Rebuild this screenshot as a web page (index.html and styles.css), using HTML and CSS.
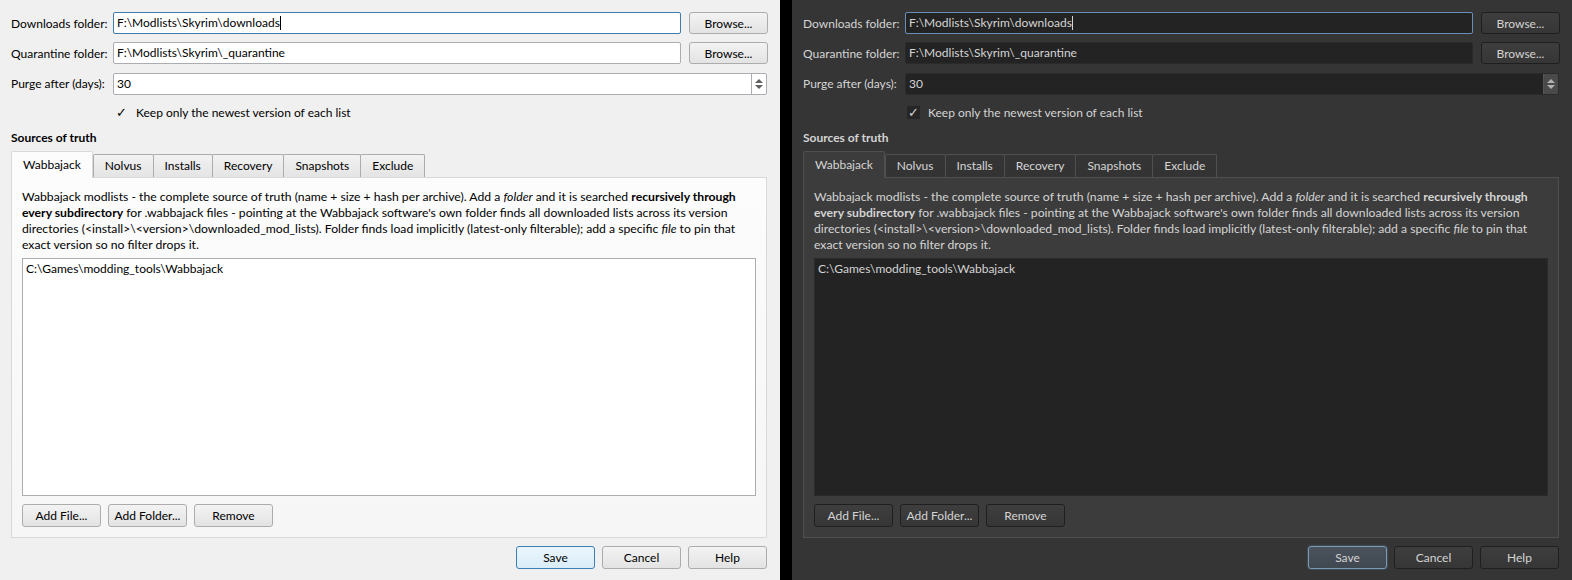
FILE: index.html
```html
<!DOCTYPE html>
<html lang="en">
<head>
  <meta charset="UTF-8">
  <title>Settings</title>
  <link rel="stylesheet" href="styles.css">
</head>
<body>

  <div class="dialog light">
    <div class="fields">
      <label>Downloads folder:</label>
      <div class="input focused">F:\Modlists\Skyrim\downloads<span class="caret"></span></div>
      <button>Browse...</button>

      <label>Quarantine folder:</label>
      <div class="input">F:\Modlists\Skyrim\_quarantine</div>
      <button>Browse...</button>

      <label>Purge after (days):</label>
      <div class="input spin">30<span class="arrows"><i class="up"></i><i class="down"></i></span></div>

      <div class="check"><span class="box">&#10003;</span>Keep only the newest version of each list</div>
    </div>

    <div class="section">Sources of truth</div>

    <div class="tabs">
      <div class="tab active">Wabbajack</div>
      <div class="tab">Nolvus</div>
      <div class="tab">Installs</div>
      <div class="tab">Recovery</div>
      <div class="tab">Snapshots</div>
      <div class="tab">Exclude</div>
    </div>
    <div class="pane">
      <p class="desc">Wabbajack modlists - the complete source of truth (name + size + hash per archive). Add a <i>folder</i> and it is searched <b>recursively through</b><br><b>every subdirectory</b> for .wabbajack files - pointing at the Wabbajack software's own folder finds all downloaded lists across its version<br>directories (&lt;install&gt;\&lt;version&gt;\downloaded_mod_lists). Folder finds load implicitly (latest-only filterable); add a specific <i>file</i> to pin that<br>exact version so no filter drops it.</p>
      <div class="list">
        <div class="item">C:\Games\modding_tools\Wabbajack</div>
      </div>
      <div class="row">
        <button>Add File...</button>
        <button>Add Folder...</button>
        <button>Remove</button>
      </div>
    </div>

    <div class="footer">
      <button class="default">Save</button>
      <button>Cancel</button>
      <button>Help</button>
    </div>
  </div>

  <div class="divider"></div>

  <div class="dialog dark">
    <div class="fields">
      <label>Downloads folder:</label>
      <div class="input focused">F:\Modlists\Skyrim\downloads<span class="caret"></span></div>
      <button>Browse...</button>

      <label>Quarantine folder:</label>
      <div class="input">F:\Modlists\Skyrim\_quarantine</div>
      <button>Browse...</button>

      <label>Purge after (days):</label>
      <div class="input spin">30<span class="arrows"><i class="up"></i><i class="down"></i></span></div>

      <div class="check"><span class="box">&#10003;</span>Keep only the newest version of each list</div>
    </div>

    <div class="section">Sources of truth</div>

    <div class="tabs">
      <div class="tab active">Wabbajack</div>
      <div class="tab">Nolvus</div>
      <div class="tab">Installs</div>
      <div class="tab">Recovery</div>
      <div class="tab">Snapshots</div>
      <div class="tab">Exclude</div>
    </div>
    <div class="pane">
      <p class="desc">Wabbajack modlists - the complete source of truth (name + size + hash per archive). Add a <i>folder</i> and it is searched <b>recursively through</b><br><b>every subdirectory</b> for .wabbajack files - pointing at the Wabbajack software's own folder finds all downloaded lists across its version<br>directories (&lt;install&gt;\&lt;version&gt;\downloaded_mod_lists). Folder finds load implicitly (latest-only filterable); add a specific <i>file</i> to pin that<br>exact version so no filter drops it.</p>
      <div class="list">
        <div class="item">C:\Games\modding_tools\Wabbajack</div>
      </div>
      <div class="row">
        <button>Add File...</button>
        <button>Add Folder...</button>
        <button>Remove</button>
      </div>
    </div>

    <div class="footer">
      <button class="default">Save</button>
      <button>Cancel</button>
      <button>Help</button>
    </div>
  </div>

</body>
</html>
```

FILE: styles.css
```css
body {
  margin: 0;
  display: flex;
  height: 580px;
  font-family: Lato, "Open Sans", sans-serif;
  font-size: 12px;
  background: #000;
}

/* colour themes */
.light {
  --bg: #f0f0f0;
  --text: #000;
  --field: #fff;
  --field-border: #abadb3;
  --focus: #3d7bad;
  --btn-top: #f3f3f3;
  --btn-bottom: #e3e3e3;
  --btn-border: #acacac;
  --tab-top: #f2f2f2;
  --tab-bottom: #e4e4e4;
  --pane: #fcfcfc;
  --pane-border: #d9d9d9;
  --tab-border: #acacac;
}
.dark {
  --bg: #353535;
  --text: #d4d4d4;
  --field: #232323;
  --field-border: #2a2a2a;
  --focus: #6a8fb8;
  --btn-top: #3e3e3e;
  --btn-bottom: #363636;
  --btn-border: #1f1f1f;
  --tab-top: #353535;
  --tab-bottom: #333;
  --pane: #3c3c3c;
  --pane-border: #4f4f4f;
  --tab-border: #505050;
}

.dialog {
  width: 780px;
  background: var(--bg);
  color: var(--text);
  padding: 12px 13px 0 11px;
  box-sizing: border-box;
}
.divider {
  width: 12px;
  background: #000;
}

.fields {
  display: grid;
  grid-template-columns: 94px 1fr 78px;
  column-gap: 8px;
  row-gap: 8px;
  align-items: center;
}
.fields label {
  white-space: nowrap;
}
.fields button {
  height: 22px;
}
.input {
  height: 22px;
  line-height: 20px;
  box-sizing: border-box;
  border: 1px solid var(--field-border);
  border-radius: 2px;
  background: var(--field);
  padding: 0 3px;
  position: relative;
}
.input.focused {
  border-color: var(--focus);
}
.caret {
  display: inline-block;
  width: 1px;
  height: 14px;
  background: var(--text);
  vertical-align: -3px;
}
.spin {
  grid-column: 2 / 4;
  margin-top: 1px;
  padding-right: 16px;
}
.arrows {
  position: absolute;
  right: 0;
  top: 0;
  bottom: 0;
  width: 14px;
  border-left: 1px solid var(--field-border);
  display: flex;
  flex-direction: column;
  align-items: center;
  justify-content: center;
  gap: 2px;
}
.dark .arrows {
  background: #4a4a4a;
  border-left-color: #555;
}
.arrows i {
  width: 0;
  height: 0;
  border-left: 4px solid transparent;
  border-right: 4px solid transparent;
}
.arrows .up {
  border-bottom: 4px solid #606060;
}
.arrows .down {
  border-top: 4px solid #606060;
}
.dark .arrows .up { border-bottom-color: #b0b0b0; }
.dark .arrows .down { border-top-color: #b0b0b0; }

.check {
  grid-column: 2 / 4;
  display: flex;
  align-items: center;
  gap: 8px;
  padding-left: 2px;
  margin-top: 2px;
}
.box {
  width: 13px;
  height: 13px;
  line-height: 13px;
  text-align: center;
  font-size: 13px;
  font-family: "DejaVu Sans", sans-serif;
}
.dark .box {
  background: #262626;
}

button {
  font-family: inherit;
  font-size: 12px;
  color: var(--text);
  height: 23px;
  width: 79px;
  border: 1px solid var(--btn-border);
  border-radius: 3px;
  background: linear-gradient(var(--btn-top), var(--btn-bottom));
  padding: 0;
}
.light button.default {
  border-color: #3c7fb1;
  background: linear-gradient(#eaf6fd, #d9edf8);
}
.dark button.default {
  border-color: #7a9ab8;
  background: linear-gradient(#4a535c, #404850);
  box-shadow: 0 0 2px #5b7d9e;
}

.section {
  font-weight: bold;
  margin-top: 10px;
  line-height: 16px;
}

.tabs {
  display: flex;
  align-items: flex-end;
  margin-top: 5px;
  height: 26px;
}
.tab {
  height: 23px;
  line-height: 22px;
  padding: 0 11px;
  border: 1px solid var(--tab-border);
  border-bottom: none;
  border-radius: 2px 2px 0 0;
  background: linear-gradient(var(--tab-top), var(--tab-bottom));
  box-sizing: border-box;
  margin-left: -1px;
}
.tab.active {
  height: 27px;
  line-height: 26px;
  margin-left: 0;
  margin-right: 1px;
  background: var(--pane);
  border-color: var(--pane-border);
  position: relative;
  top: 1px;
  padding: 0 11px;
}
.pane {
  height: 361px;
  box-sizing: border-box;
  background: var(--pane);
  border: 1px solid var(--pane-border);
  padding: 11px 10px 0 10px;
  display: flex;
  flex-direction: column;
}
.light .pane {
  background: linear-gradient(#fcfcfc, #f6f6f6);
}
.desc {
  margin: 0;
  line-height: 16px;
  font-size: 12.2px;
  white-space: nowrap;
}
.list {
  margin-top: 5px;
  height: 238px;
  box-sizing: border-box;
  border: 1px solid var(--field-border);
  background: var(--field);
  padding: 2px 3px;
}
.light .list {
  border-color: #adadad;
}
.item {
  line-height: 16px;
}
.row {
  display: flex;
  gap: 7px;
  margin-top: 8px;
}

.footer {
  display: flex;
  justify-content: flex-end;
  gap: 7px;
  margin-top: 8px;
}
```
